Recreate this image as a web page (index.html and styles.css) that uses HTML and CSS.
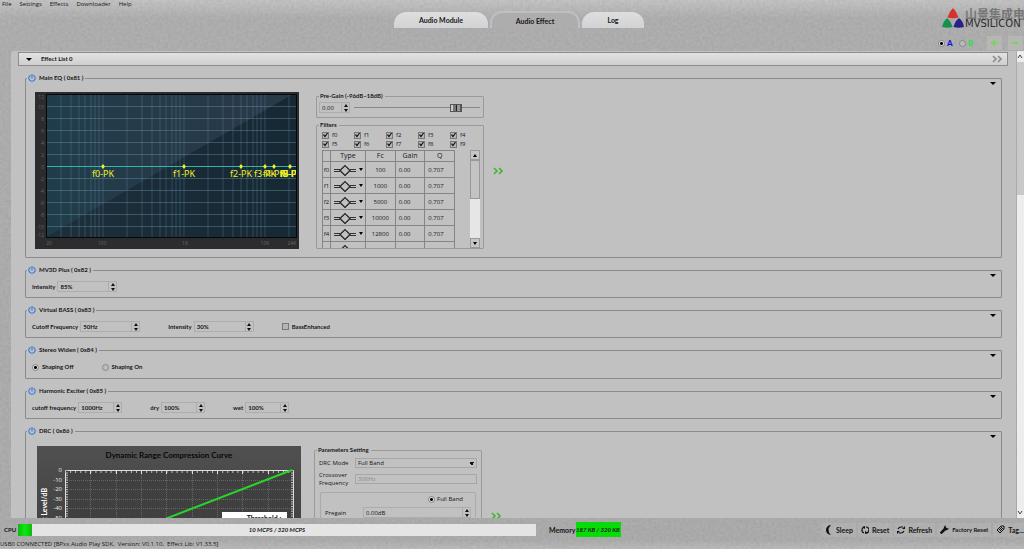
FILE: index.html
```html
<!DOCTYPE html>
<html lang="en">
<head>
<meta charset="utf-8">
<title>Audio Effect</title>
<link rel="stylesheet" href="styles.css">
</head>
<body>
<svg class="texture" aria-hidden="true"><filter id="grain"><feTurbulence type="fractalNoise" baseFrequency="0.35" numOctaves="2" seed="4"/><feColorMatrix values="0 0 0 0 0  0 0 0 0 0  0 0 0 0 0  0.5 0 0 0 -0.15"/></filter><rect width="100%" height="100%" filter="url(#grain)"/></svg>
<svg class="defs" aria-hidden="true">
  <symbol id="power" viewBox="0 0 16 16"><path d="M4.500 3a6.300 6.300 0 1 0 7 0M8 1v7" fill="none" stroke="#3a7fe0" stroke-width="2.400" stroke-linecap="round"/></symbol>
  <symbol id="peak" viewBox="0 0 22 12"><path d="M0 5.500h6M0 7.500h6M16 5.500h6M16 7.500h6" fill="none" stroke="#333" stroke-width="1"/><path d="M6 6.500l5-5 5 5-5 5z" fill="none" stroke="#222" stroke-width="1.200"/></symbol>
  <symbol id="more" viewBox="0 0 10 8"><path d="M1 1l3 3-3 3M6 1l3 3-3 3" fill="none" stroke="currentColor" stroke-width="1.6"/></symbol>
</svg>
<nav class="menu"><button>File</button><button>Settings</button><button>Effects</button><button>Downloader</button><button>Help</button></nav>
<header class="top">
  <nav class="tabs"><button class="tab wide">Audio Module</button><button class="tab wide active">Audio Effect</button><button class="tab">Log</button></nav>
  <div class="brand">
    <div class="logo">
      <svg width="22" height="20" viewBox="0 0 22 20"><path d="M11 0q4 4 5.500 9.500-5.500 1.500-11 0 1.500-5.500 5.500-9.500z" fill="#d9302a"/><path d="M5 10q4 3 5.500 9-5 1.500-10.500 0 1.500-6 5-9z" fill="#16904e"/><path d="M17 10q4 3 5 9-5 1.500-10.500 0 1.500-6 5.500-9z" fill="#27228a"/></svg>
      <div><div class="cn">山景集成电路</div><div class="en">MVSILICON</div></div>
    </div>
    <div class="bank">
      <label class="blue"><input type="radio" name="bank" checked>A</label>
      <label class="green"><input type="radio" name="bank">B</label>
      <button class="flat add" aria-label="Add"><svg width="8" height="8" viewBox="0 0 8 8"><path d="M4 1v6M1 4h6" stroke="currentColor" stroke-width="2"/></svg></button><button class="flat" aria-label="Remove"><svg width="8" height="8" viewBox="0 0 8 8"><path d="M1 4h6" stroke="currentColor" stroke-width="2"/></svg></button>
    </div>
  </div>
</header>
<main class="work">
  <div class="panel">
    <button class="listhead"><i class="down"></i><span>Effect List 0</span><svg width="10" height="8"><use href="#more"/></svg></button>
    <div class="list">
      <fieldset class="fx">
        <legend><svg width="8" height="8"><use href="#power"/></svg>Main EQ ( 0x81 )</legend>
        <button class="fold" aria-label="Collapse"><i class="down"></i></button>
        <div class="row eq">
          <svg class="plot" width="264" height="157" viewBox="0 0 264 157">
            <defs><linearGradient id="lo" x2="1"><stop stop-color="#1e2f3c"/><stop offset="1" stop-color="#162833"/></linearGradient><linearGradient id="hi" x2="1"><stop stop-color="#203c4a"/><stop offset=".5" stop-color="#263a49"/><stop offset="1" stop-color="#293948"/></linearGradient><clipPath id="area"><rect x="11" y="2" width="250" height="144"/></clipPath></defs>
            <rect width="264" height="157" fill="#2c2c2e"/>
            <rect x="11" y="2" width="251" height="144" fill="url(#lo)"/>
            <path d="M11 2h247L11 145z" fill="url(#hi)"/>
            <path d="M26 2v144M36 2v144M44 2v144M50 2v144M56 2v144M60 2v144M64 2v144M68 2v144M92 2v144M107 2v144M117 2v144M125 2v144M131 2v144M137 2v144M141 2v144M145 2v144M149 2v144M173 2v144M188 2v144M198 2v144M206 2v144M212 2v144M218 2v144M222 2v144M226 2v144M230 2v144M254 2v144" stroke="#6a93a8" stroke-opacity=".32" fill="none"/>
            <path d="M11 14.500h251M11 26.500h251M11 38.500h251M11 50.500h251M11 62.500h251M11 86.500h251M11 98.500h251M11 110.500h251M11 122.500h251M11 134.500h251" stroke="#6a93a8" stroke-opacity=".42" fill="none"/>
            <rect x="11.500" y="2.500" width="250" height="143" fill="none" stroke="#050808"/>
            <path d="M12 74.500h249" stroke="#35b5a8"/>
            <g class="ytick"><text x="9" y="7">12</text><text x="9" y="17">10</text><text x="9" y="29">8</text><text x="9" y="41">6</text><text x="9" y="53">4</text><text x="9" y="65">2</text><text x="9" y="77">0</text><text x="9" y="89">-2</text><text x="9" y="101">-4</text><text x="9" y="113">-6</text><text x="9" y="125">-8</text><text x="9" y="137">-10</text><text x="9" y="145">-12</text></g>
            <g class="xtick"><text x="14" y="153">20</text><text x="67" y="153">100</text><text x="150" y="153">1K</text><text x="230" y="153">10K</text><text x="257" y="153">24K</text></g>
            <g class="points" clip-path="url(#area)"><path d="M66 74.500l2-2.500 2 2.500-2 2.500zM147 74.500l2-2.500 2 2.500-2 2.500zM204 74.500l2-2.500 2 2.500-2 2.500zM228 74.500l2-2.500 2 2.500-2 2.500zM237 74.500l2-2.500 2 2.500-2 2.500zM253 74.500l2-2.500 2 2.500-2 2.500z"/><text x="68" y="85">f0-PK</text><text x="149" y="85">f1-PK</text><text x="206" y="85">f2-PK</text><text x="230" y="85">f3-PK</text><text x="239" y="85">f4-PK</text><text x="256" y="85">f5-PK</text><text x="256" y="85">f6-PK</text><text x="256" y="85">f7-PK</text><text x="256" y="85">f8-PK</text><text x="256" y="85">f9-PK</text></g>
          </svg>
          <div class="side">
            <fieldset class="box gain"><legend>Pre-Gain (-96dB~18dB)</legend>
              <div class="gainrow"><span class="spin short"><input type="text" value="0.00" aria-label="Pre-Gain"><i class="steps"></i></span><input class="slider" type="range" min="-96" max="18" value="0" aria-label="Pre-Gain level"></div>
            </fieldset>
            <fieldset class="box filters"><legend>Filters</legend>
              <div class="checks"><label><input type="checkbox" checked>f0</label><label><input type="checkbox" checked>f1</label><label><input type="checkbox" checked>f2</label><label><input type="checkbox" checked>f3</label><label><input type="checkbox" checked>f4</label><label><input type="checkbox" checked>f5</label><label><input type="checkbox" checked>f6</label><label><input type="checkbox" checked>f7</label><label><input type="checkbox" checked>f8</label><label><input type="checkbox" checked>f9</label></div>
              <div class="tablewrap">
                <table>
                  <thead><tr><th></th><th>Type</th><th>Fc</th><th>Gain</th><th>Q</th></tr></thead>
                  <tbody>
                    <tr><th>f0</th><td><span class="type"><svg width="22" height="12"><use href="#peak"/></svg><i class="down tiny"></i></span></td><td class="mid">100</td><td>0.00</td><td>0.707</td></tr>
                    <tr><th>f1</th><td><span class="type"><svg width="22" height="12"><use href="#peak"/></svg><i class="down tiny"></i></span></td><td class="mid">1000</td><td>0.00</td><td>0.707</td></tr>
                    <tr><th>f2</th><td><span class="type"><svg width="22" height="12"><use href="#peak"/></svg><i class="down tiny"></i></span></td><td class="mid">5000</td><td>0.00</td><td>0.707</td></tr>
                    <tr><th>f3</th><td><span class="type"><svg width="22" height="12"><use href="#peak"/></svg><i class="down tiny"></i></span></td><td class="mid">10000</td><td>0.00</td><td>0.707</td></tr>
                    <tr><th>f4</th><td><span class="type"><svg width="22" height="12"><use href="#peak"/></svg><i class="down tiny"></i></span></td><td class="mid">12800</td><td>0.00</td><td>0.707</td></tr>
                    <tr><th></th><td><span class="type"><svg width="22" height="12"><use href="#peak"/></svg></span></td><td></td><td></td><td></td></tr>
                  </tbody>
                </table>
                <div class="bar"><button aria-label="Up"><i class="up tiny"></i></button><div class="grip"></div><button class="last" aria-label="Down"><i class="down tiny"></i></button></div>
              </div>
            </fieldset>
          </div>
          <button class="more" aria-label="More"><svg width="10" height="8"><use href="#more"/></svg></button>
        </div>
      </fieldset>
      <fieldset class="fx">
        <legend><svg width="8" height="8"><use href="#power"/></svg>MV3D Plus ( 0x82 )</legend>
        <button class="fold" aria-label="Collapse"><i class="down"></i></button>
        <div class="row"><label>Intensity<span class="spin"><input type="text" value="85%"><i class="steps"></i></span></label></div>
      </fieldset>
      <fieldset class="fx">
        <legend><svg width="8" height="8"><use href="#power"/></svg>Virtual BASS ( 0x83 )</legend>
        <button class="fold" aria-label="Collapse"><i class="down"></i></button>
        <div class="row"><label>Cutoff Frequency<span class="spin"><input type="text" value="50Hz"><i class="steps"></i></span></label><label>Intensity<span class="spin"><input type="text" value="30%"><i class="steps"></i></span></label><label><input type="checkbox">BassEnhanced</label></div>
      </fieldset>
      <fieldset class="fx tall">
        <legend><svg width="8" height="8"><use href="#power"/></svg>Stereo Widen ( 0x84 )</legend>
        <button class="fold" aria-label="Collapse"><i class="down"></i></button>
        <div class="row"><label><input type="radio" name="shape" checked>Shaping Off</label><label><input type="radio" name="shape">Shaping On</label></div>
      </fieldset>
      <fieldset class="fx">
        <legend><svg width="8" height="8"><use href="#power"/></svg>Harmonic Exciter ( 0x85 )</legend>
        <button class="fold" aria-label="Collapse"><i class="down"></i></button>
        <div class="row"><label>cutoff frequency<span class="spin mini"><input type="text" value="1000Hz"><i class="steps"></i></span></label><label>dry<span class="spin mini"><input type="text" value="100%"><i class="steps"></i></span></label><label>wet<span class="spin mini"><input type="text" value="100%"><i class="steps"></i></span></label></div>
      </fieldset>
      <fieldset class="fx">
        <legend><svg width="8" height="8"><use href="#power"/></svg>DRC ( 0x86 )</legend>
        <button class="fold" aria-label="Collapse"><i class="down"></i></button>
        <div class="row drc">
          <svg class="curve" width="264" height="180" viewBox="0 0 264 180">
            <defs><linearGradient id="dg" x2="0" y2="1"><stop stop-color="#505050"/><stop offset="1" stop-color="#303030"/></linearGradient></defs>
            <rect width="264" height="180" fill="url(#dg)"/>
            <rect x="28" y="24" width="228" height="150" fill="#404040"/>
            <path d="M53.500 24v150M79.500 24v150M104.500 24v150M129.500 24v150M155.500 24v150M180.500 24v150M205.500 24v150M231.500 24v150M28 34.500h228M28 43.500h228M28 53.500h228M28 62.500h228M28 72.500h228" stroke="#666" stroke-dasharray="1 1" fill="none"/>
            <path d="M28.500 174V24.500h228V174" fill="none" stroke="#ddd"/>
            <path d="M28 26h228" stroke="#bbb" stroke-width="2" stroke-dasharray="1 4.070"/><path d="M53.500 24v4M79.500 24v4M104.500 24v4M129.500 24v4M155.500 24v4M180.500 24v4M205.500 24v4M231.500 24v4" stroke="#ddd"/><path d="M30 24v150M255 24v150" stroke="#bbb" stroke-width="2" stroke-dasharray="1 1.400"/>
            <path d="M128 73L255 24" stroke="#29d32b" stroke-width="2"/>
            <text class="title" x="132" y="12">Dynamic Range Compression Curve</text>
            <g class="dtick"><text x="25" y="26">0</text><text x="25" y="36">-10</text><text x="25" y="45">-20</text><text x="25" y="55">-30</text><text x="25" y="64">-40</text><text x="25" y="74">-50</text></g>
            <text class="axis" transform="translate(10 94) rotate(-90)">Output Level/dB</text>
            <rect x="185" y="66" width="65" height="40" fill="#fff"/><text class="note" x="227" y="75">Threshold :</text>
          </svg>
          <fieldset class="box params"><legend>Parameters Setting</legend>
            <div class="form"><label for="mode">DRC Mode</label><select id="mode"><option>Full Band</option></select>
            <label for="cross">Crossover Frequency</label><input id="cross" type="text" value="300Hz" disabled></div>
            <div class="band"><label class="full"><input type="radio" name="band" checked>Full Band</label><div class="pre"><label for="pre">Pregain</label><span class="spin"><input id="pre" type="text" value="0.00dB"><i class="steps"></i></span></div></div>
          </fieldset>
          <button class="more drcmore" aria-label="More"><svg width="10" height="8"><use href="#more"/></svg></button>
        </div>
      </fieldset>
    </div>
  </div>
  <div class="vscroll"><svg width="6" height="11" viewBox="0 0 6 11"><path d="M1 7l2-3 2 3" fill="none" stroke="#444"/></svg><div class="thumb"></div><svg class="last" width="6" height="11" viewBox="0 0 6 11"><path d="M1 4l2 3 2-3" fill="none" stroke="#444"/></svg></div>
</main>
<footer class="foot">
  <div class="meters">
    <span class="name">CPU</span><div class="cpu"><div class="fill"></div><span>10 MCPS / 320 MCPS</span></div>
    <span class="name mem">Memory</span><span class="memory">187 KB / 320 KB</span>
    <div class="actions">
      <button><svg width="8" height="10" viewBox="0 0 8 10"><path d="M6 0a5 5 0 1 0 0 10Q1 5 6 0z" fill="#111"/></svg>Sleep</button>
      <button><svg width="8" height="8" viewBox="0 0 8 8"><path d="M2.500 1.500A3 3 0 0 0 3 7M5 7A3 3 0 0 0 5 1" fill="none" stroke="#111" stroke-width="1.200"/><path d="M4 0L1 1l3 2zM4 8l3-1-3-2z" fill="#111"/></svg>Reset</button>
      <button><svg width="8" height="8" viewBox="0 0 8 8"><path d="M1 3q1-2 3-2h2M7 5q-1 2-3 2H2" fill="none" stroke="#111" stroke-width="1.200"/><path d="M5 3h3V0zM3 5H0v3z" fill="#111"/></svg>Refresh</button>
      <button class="small"><svg width="9" height="9" viewBox="0 0 10 10"><path d="M0 8l4-4Q4 1 7 0L6 2l2 2 2-1Q9 6 6 6l-4 4q-2 0-2-2z" fill="#111"/></svg>Factory Reset</button>
      <button><svg width="9" height="9" viewBox="0 0 9 9"><path d="M1 5l4-4 3 0v3L4 8zM3 5l3-3M4 6l3-3" fill="none" stroke="#111" stroke-width="1"/></svg>Tag...</button>
    </div>
  </div>
  <div class="status">USB0 CONNECTED [BPxx Audio Play SDK,&nbsp; Version: V0.1.10,&nbsp; Effect Lib: V1.33.5]</div>
</footer>
</body>
</html>
```
FILE: styles.css
```css
* { box-sizing: border-box; }
html, body { height: 100%; }
body { margin: 0; display: flex; flex-direction: column; overflow: hidden; font: 700 6px/8px Lato, "Open Sans", sans-serif; color: #161616; background: linear-gradient(#c4c4c4, #b0b0b0 18px, #adadad 540px, #bbb); position: relative; }
button, input, select { font: inherit; color: inherit; margin: 0; padding: 0; border: 0; background: none; border-radius: 0; min-width: 0; }
svg { display: block; flex: none; }
fieldset { margin: 0; min-width: 0; }
.texture { position: absolute; inset: 0; width: 100%; height: 100%; opacity: .2; z-index: -1; }
.defs { position: absolute; width: 0; height: 0; }
.menu, .status, .checks, table, .short, .form, .band { font-family: "Open Sans", "Noto Sans", sans-serif; font-weight: 400; }
.menu { display: flex; gap: 8px; padding-left: 2px; height: 8px; }
.top { display: grid; grid-template-columns: 1fr auto 1fr; height: 43px; padding-left: 14px; }
.tabs { grid-column: 2; display: flex; padding-top: 4px; gap: 2px; height: 20px; font-size: 7px; }
.tab { width: 62px; background: linear-gradient(#dededf, #d2d3d4); border-radius: 12px 12px 0 0; }
.tab.wide { width: 94px; }
.tab.active { background: #adadad; border: 2px solid #bcc0c4; border-bottom: 0; margin-top: -1px; width: 90px; }
.brand { display: flex; flex-direction: column; align-items: flex-end; overflow: hidden; }
.logo { display: flex; width: 82px; height: 22px; gap: 1px; overflow: hidden; white-space: nowrap; }
.cn { font: 700 12px/11px "Noto Sans CJK SC", sans-serif; color: #777; }
.en { font: 400 10px/9px "DejaVu Sans", sans-serif; color: #2c2c2c; }
.bank { display: flex; align-items: center; width: 86px; gap: 6px; height: 14px; margin-top: 6px; overflow: hidden; }
.bank label { display: flex; align-items: center; gap: 2px; font-size: 8px; font-weight: 900; }
.blue { color: #1616d8; }
.green { color: #35dc4a; }
.flat { flex: none; display: flex; align-items: center; justify-content: center; width: 15px; height: 14px; background: #b5b7b2; color: #80cf60; }
.add { margin-left: 8px; }
.work { flex: 1; min-height: 0; display: flex; padding-left: 11px; gap: 1px; }
.panel { flex: 1; overflow: hidden; background: #c1c1c1; border-radius: 4px 0 0 0; padding: 1px 8px 0 7px; }
.listhead { display: flex; align-items: center; width: 100%; height: 14px; padding: 0 5px 0 7px; gap: 9px; border: 1px solid #8d8d8d; background: linear-gradient(#e2e2e2, #cfcfcf); }
.listhead svg { margin-left: auto; color: #8c8c8c; }
.down, .up { display: block; width: 0; height: 0; flex: none; border: 3px solid transparent; border-bottom: 0; border-top-color: #000; }
.up { border-top: 0; border-bottom: 3px solid #000; }
.down.tiny, .up.tiny { border-left-width: 2px; border-right-width: 2px; }
.list { padding: 6px 6px 0 7px; display: flex; flex-direction: column; gap: 6px; }
.fx { position: relative; border: 1px solid #8b8b8b; border-radius: 1px; padding: 0; }
.fx > legend { display: flex; align-items: center; gap: 3px; height: 12px; padding: 0 2px 0 1px; margin-left: 1px; }
.fold { position: absolute; top: -4px; right: 5px; padding: 2px 0; }
.row { display: flex; align-items: center; gap: 28px; padding: 5px 6px; }
.tall .row { padding: 7px 6px; }
.row label { display: flex; align-items: center; gap: 2px; }
.spin { display: flex; align-items: center; width: 60px; height: 11px; border: 1px solid #adadad; padding-left: 2px; }
.spin input { flex: 1; width: 10px; height: 9px; }
.spin.mini { width: 44px; }
.spin.short { width: 31px; }
.steps { flex: none; width: 8px; height: 9px; border-left: 1px solid #adadad; display: flex; flex-direction: column; align-items: center; justify-content: center; gap: 2px; }
.steps::before { content: ""; border: 2px solid transparent; border-top: 0; border-bottom: 3px solid #111; }
.steps::after { content: ""; border: 2px solid transparent; border-bottom: 0; border-top: 3px solid #111; }
input[type=checkbox] { appearance: none; flex: none; width: 7px; height: 7px; border: 1px solid #777; background: #b5b5b5; }
.row label:has(> input[type=checkbox]), .tall label { gap: 3px; }
input[type=checkbox]:checked::before { content: ""; display: block; width: 5px; height: 5px; background: #111; clip-path: polygon(0 50%, 20% 35%, 40% 60%, 85% 0, 100% 15%, 40% 100%); }
input[type=radio] { appearance: none; flex: none; width: 7px; height: 7px; border: 1px solid #888; border-radius: 50%; background: #bbb; }
input[type=radio]:checked { background: radial-gradient(#000 0 1px, #ddd 2px); }
.row.eq { align-items: flex-start; gap: 0; padding: 8px 9px; }
.ytick text, .xtick text { font: 400 5px "Open Sans", sans-serif; fill: #66666a; text-anchor: end; }
.xtick text { text-anchor: middle; }
.points { fill: #eef02a; }
.points text { font: 400 9px "Noto Sans", sans-serif; text-anchor: middle; }
.side { width: 168px; margin-left: 17px; }
.box { border: 1px solid #9a9a9a; border-radius: 1px; padding: 0; }
.box > legend { padding: 0 2px 0 1px; margin-left: 2px; height: 8px; }
.gain { padding-bottom: 3px; }
.gainrow { display: flex; align-items: center; gap: 4px; padding: 2px 3px 1px 2px; }
.slider { appearance: none; flex: 1; height: 9px; background: linear-gradient(#888, #888) center / 100% 1px no-repeat; }
.slider::-webkit-slider-thumb { appearance: none; width: 12px; height: 8px; border: 1px solid #555; background: linear-gradient(90deg, #ccc 0 2px, #777 2px 5px, #222 5px 6px, #999 6px 9px, #555 9px); }
.filters { margin-top: 3px; overflow: hidden; }
.checks { display: grid; grid-template-columns: repeat(5, 32px); row-gap: 1px; padding: 2px 0 2px 5px; }
.checks label { height: 8px; }
.tablewrap { display: flex; justify-content: space-between; align-items: flex-start; height: 98px; padding: 0 3px 0 5px; overflow: hidden; }
table { border-collapse: collapse; table-layout: fixed; width: 133px; }
th, td { border: 1px solid #858585; padding: 0; height: 16px; font-weight: 400; text-align: center; }
td { text-align: left; padding-left: 3px; }
td.mid { text-align: center; padding: 0; }
thead th { height: 11px; font-size: 7px; }
th:first-child { width: 8px; }
thead th:nth-child(2) { width: 35px; }
.type { display: flex; align-items: center; gap: 3px; }
.bar { width: 10px; height: 98px; display: flex; flex-direction: column; background: #e6e6e6; }
.bar button { height: 10px; display: flex; align-items: center; justify-content: center; background: #c6c6c6; border: 1px solid #999; }
.grip { height: 39px; background: #c3c3c3; border: 1px solid #999; }
.last { margin-top: auto; }
.more { color: #41b52e; margin-left: 9px; align-self: center; }
.row.drc { align-items: flex-start; gap: 0; padding: 9px 11px; }
.title { font: 700 8px Lato, sans-serif; text-anchor: middle; fill: #080808; }
.dtick text { font: 400 6px "Open Sans", sans-serif; text-anchor: end; fill: #eee; }
.axis { font: 700 7px Lato, sans-serif; fill: #fff; }
.note { font: 700 7px Lato, sans-serif; text-anchor: middle; fill: #111; }
.params { width: 168px; margin-left: 13px; }
.form { display: grid; grid-template-columns: 36px 1fr; align-items: center; gap: 3px 0; padding: 4px 4px 5px; }
.form select, .form > input { height: 10px; border: 1px solid #a6a6a6; padding: 0 2px; width: 100%; }
.form select { appearance: none; background: linear-gradient(45deg, transparent 50%, #111 50%) right 4px center / 3px 3px no-repeat, linear-gradient(-45deg, transparent 50%, #111 50%) right 1px center / 3px 3px no-repeat; }
.form > input { color: #888; }
.band { margin: 0 5px; border: 1px solid #aaa; border-radius: 2px; padding: 2px 4px; height: 100px; }
.band .full { justify-content: flex-end; padding-right: 8px; margin-bottom: 4px; }
.pre { display: flex; align-items: center; justify-content: space-between; }
.pre .spin { width: 108px; }
.drcmore { align-self: flex-start; margin-top: 66px; }
.vscroll { width: 7px; display: flex; flex-direction: column; background: #ededed; }
.thumb { height: 133px; background: #c9c9c9; }
.foot { flex: none; height: 31px; }
.meters { display: flex; align-items: center; height: 23px; padding-left: 4px; }
.name { width: 14px; flex: none; }
.cpu { position: relative; width: 518px; height: 12px; display: flex; align-items: center; justify-content: center; background: #e4e4e4; font-style: italic; }
.fill { position: absolute; left: 0; top: 0; bottom: 0; width: 14px; background: linear-gradient(90deg, #12b512, #0bea0b, #12b512); }
.mem { margin-left: 13px; font-size: 7px; width: 27px; }
.memory { background: #08dc08; line-height: 15px; height: 15px; width: 45px; font-style: italic; white-space: nowrap; }
.actions { margin-left: auto; display: flex; gap: 2px; font-size: 7px; }
.actions button { display: flex; align-items: center; gap: 3px; height: 14px; padding: 0 3px; background: rgba(190,190,190,.35); white-space: nowrap; }
.actions button:last-child { padding-right: 0; }
.actions .small { font-size: 6px; }
.status { line-height: 7px; white-space: nowrap; }
```
